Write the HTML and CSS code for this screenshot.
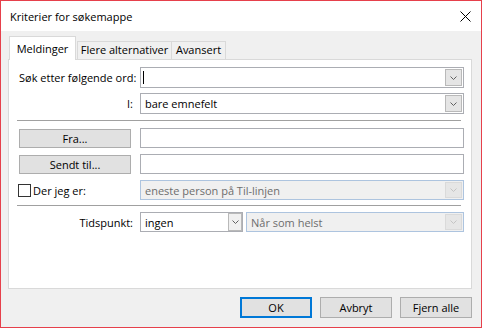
FILE: index.html
```html
<!DOCTYPE html>
<html lang="no">
<head>
    <meta charset="UTF-8">
    <title>Kriterier for søkemappe</title>
    <link rel="stylesheet" href="styles.css">
</head>
<body>
    <div class="window">
        <div class="titlebar">
            <span class="title">Kriterier for søkemappe</span>
            <svg class="close" width="11" height="11" viewBox="0 0 11 11">
                <path d="M0.5 0.5L10.5 10.5M10.5 0.5L0.5 10.5" stroke="#000" stroke-width="1" fill="none"/>
            </svg>
        </div>

        <div class="main">
            <div class="tabs">
                <div class="tab active">Meldinger</div>
                <div class="tab tab-more">Flere alternativer</div>
                <div class="tab tab-adv">Avansert</div>
            </div>

            <div class="panel">
                <div class="row tall">
                    <span class="lbl">Søk etter følgende ord:</span>
                    <div class="combo">
                        <span class="caret"></span>
                        <span class="drop"><svg width="7" height="4" viewBox="0 0 7 4"><path d="M0.5 0.5L3.5 3.5L6.5 0.5" stroke="#606060" fill="none"/></svg></span>
                    </div>
                </div>
                <div class="row tall r2">
                    <span class="lbl">I:</span>
                    <div class="combo">
                        <span class="value">bare emnefelt</span>
                        <span class="drop"><svg width="7" height="4" viewBox="0 0 7 4"><path d="M0.5 0.5L3.5 3.5L6.5 0.5" stroke="#606060" fill="none"/></svg></span>
                    </div>
                </div>

                <div class="sep"></div>

                <div class="row r3">
                    <button class="btn pick">Fra...</button>
                    <div class="field"></div>
                </div>
                <div class="row">
                    <button class="btn pick">Sendt til...</button>
                    <div class="field"></div>
                </div>
                <div class="row">
                    <span class="check-label"><span class="checkbox"></span>Der jeg er:</span>
                    <div class="combo disabled">
                        <span class="value">eneste person på Til-linjen</span>
                        <span class="drop"><svg width="7" height="4" viewBox="0 0 7 4"><path d="M0.5 0.5L3.5 3.5L6.5 0.5" stroke="#c4c4c4" fill="none"/></svg></span>
                    </div>
                </div>

                <div class="sep sep2"></div>

                <div class="row">
                    <span class="lbl">Tidspunkt:</span>
                    <div class="pair">
                        <div class="combo when">
                            <span class="value">ingen</span>
                            <span class="drop small"><svg width="7" height="4" viewBox="0 0 7 4"><path d="M0.5 0.5L3.5 3.5L6.5 0.5" stroke="#606060" fill="none"/></svg></span>
                        </div>
                        <div class="combo disabled range">
                            <span class="value">Når som helst</span>
                            <span class="drop"><svg width="7" height="4" viewBox="0 0 7 4"><path d="M0.5 0.5L3.5 3.5L6.5 0.5" stroke="#c4c4c4" fill="none"/></svg></span>
                        </div>
                    </div>
                </div>
            </div>

            <div class="actions">
                <button class="btn default">OK</button>
                <button class="btn">Avbryt</button>
                <button class="btn">Fjern alle</button>
            </div>
        </div>
    </div>
</body>
</html>
```

FILE: styles.css
```css
* {
    box-sizing: border-box;
}
body {
    margin: 0;
    font-family: "Open Sans", "Noto Sans", sans-serif;
    font-size: 11px;
    color: #000;
}
.window {
    width: 482px;
    height: 328px;
    border: 1px solid #e6404b;
    background-color: #f0f0f0;
    display: flex;
    flex-direction: column;
}
.titlebar {
    height: 30px;
    background-color: #fff;
    display: flex;
    align-items: center;
    justify-content: space-between;
    padding: 0 10px 0 9px;
}
.close {
    display: block;
}
.main {
    flex: 1;
    display: flex;
    flex-direction: column;
    padding: 5px 9px 0 7px;
}

/* tabs */
.tabs {
    display: flex;
    align-items: flex-end;
    margin-bottom: -1px;
    position: relative;
    z-index: 1;
}
.tab {
    height: 18px;
    line-height: 16px;
    padding-top: 0;
    margin-bottom: 1px;
    border: 1px solid #d9d9d9;
    border-bottom: none;
    background-color: #f0f0f0;
    text-align: center;
    white-space: nowrap;
}
.tab.active {
    height: 24px;
    line-height: 17px;
    padding-top: 3px;
    margin: 0 1px 0 1px;
    width: 67px;
    background-color: #fff;
    margin-bottom: 0;
}
.tab-more {
    width: 95px;
}
.tab-adv {
    width: 54px;
    border-left: none;
}

/* panel */
.panel {
    height: 230px;
    background-color: #fff;
    border: 1px solid #d9d9d9;
    padding: 7px 7px 0 10px;
    display: flex;
    flex-direction: column;
    gap: 6px;
}
.row {
    display: grid;
    grid-template-columns: 114px 324px;
    column-gap: 7px;
    align-items: center;
    height: 20px;
}
.row.tall {
    height: 21px;
}
.row.r2 {
    margin-top: -1px;
}
.row.r3 {
    margin-top: 1px;
}
.lbl {
    text-align: right;
    white-space: nowrap;
}
.sep {
    height: 1px;
    background-color: #a0a0a0;
    margin: 0 3px 0 -2px;
}
.sep2 {
    margin-top: -1px;
}

/* inputs */
.combo {
    height: 100%;
    border: 1px solid #abadb3;
    background-color: #fff;
    display: flex;
    align-items: center;
    padding: 1px 1px 1px 4px;
}
.value {
    flex: 1;
    white-space: nowrap;
    overflow: hidden;
}
.caret {
    width: 1px;
    height: 13px;
    background-color: #000;
    margin-left: -2px;
}
.drop {
    margin-left: auto;
    width: 17px;
    height: 100%;
    background-color: #e5e5e5;
    border: 1px solid #b9b9b9;
    display: flex;
    align-items: center;
    justify-content: center;
}
.drop svg {
    display: block;
}
.drop.small {
    width: 14px;
    height: calc(100% + 2px);
    margin-right: -1px;
    background-color: #f0f0f0;
}
.combo.disabled {
    background-color: #f0f0f0;
    border-color: #adc4df;
    color: #6d6d6d;
}
.combo.disabled .drop {
    background-color: #e6e6e6;
    border-color: #dadada;
}
.field {
    height: 100%;
    border: 1px solid #abadb3;
    background-color: #fff;
}
.pair {
    display: flex;
    gap: 3px;
    height: 100%;
}
.when {
    width: 103px;
}
.range {
    flex: 1;
}

/* buttons */
.btn {
    font-family: inherit;
    font-size: 11px;
    color: #000;
    background-color: #e1e1e1;
    border: 1px solid #adadad;
    padding: 0;
    height: 21px;
    width: 72px;
}
.btn.pick {
    width: 112px;
    height: 19px;
}
.btn.default {
    border: 2px solid #0078d7;
}
.check-label {
    display: flex;
    align-items: center;
    gap: 2px;
    margin-left: -1px;
    white-space: nowrap;
}
.checkbox {
    width: 13px;
    height: 13px;
    border: 1px solid #333;
    background-color: #fff;
}
.actions {
    display: flex;
    justify-content: flex-end;
    gap: 8px;
    margin-top: 8px;
}
```
